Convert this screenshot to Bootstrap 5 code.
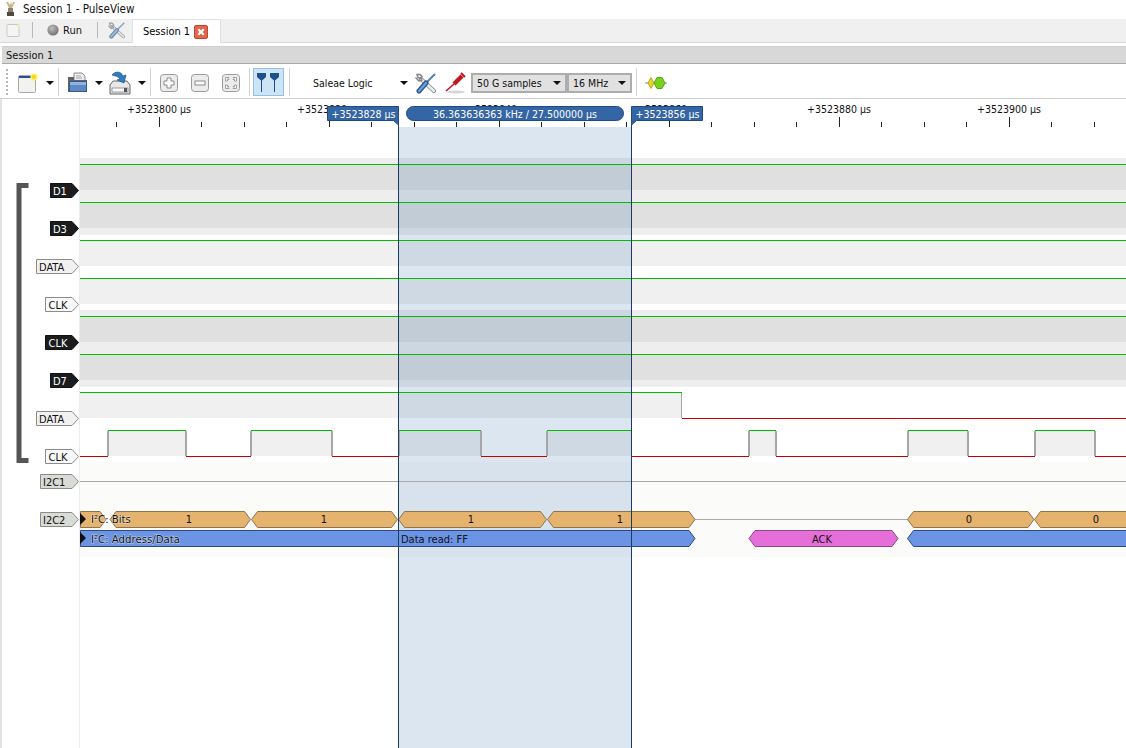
<!DOCTYPE html>
<html lang="en">
<head>
<meta charset="utf-8">
<title>Session 1 - PulseView</title>
<link href="https://cdn.jsdelivr.net/npm/bootstrap@5.3.0/dist/css/bootstrap.min.css" rel="stylesheet">
<style>
html,body{height:100%;margin:0;overflow:hidden;background:#fff}
body{font-family:"DejaVu Sans","Liberation Sans",sans-serif;font-stretch:condensed;font-size:10.5px;color:#111;line-height:1}
.pv-win{width:1126px;height:748px;overflow:hidden}
.pv-title{height:19px;padding-left:5px;font-size:11.5px}
.pv-title svg{margin-right:7px}
.pv-tabs{height:24px;background:#f0f0f0;border-bottom:1px solid #d9d9d9;padding-left:6px;font-size:11px}
.pv-tabs .nav-link{font-size:11px;color:#111;background:#fff;border:1px solid #d9d9d9;border-bottom:0;border-radius:0;height:24px;width:89px;padding:0 12px 0 10px;margin:1px 0 -1px 7px;display:flex;align-items:center;justify-content:space-between}
.pv-vsep{width:1px;height:16px;background:#b9b9b9}
.pv-sp10{margin-left:10px}
.pv-sp15{margin-left:15px}
.pv-sp13{margin-left:13px}
.pv-sp11{margin-left:11px}
.pv-sp9{margin-left:9px}
.pv-sp6{margin-left:6px}
.pv-sp7{margin-left:7px}
.pv-sp5{margin-left:5px}
.pv-sp3{margin-left:3px}
.pv-gap{height:3px}
.pv-dock{height:19px;background:#d8d8d8;border-top:1px solid #cfcfcf;border-bottom:1px solid #a9a9a9;margin-left:2px;padding-left:4px;font-size:11px}
.pv-tool{height:35px;border-bottom:1px solid #cfcfcf;padding:4px 0 0 6px}
.pv-grip{width:2px;height:26px;background:repeating-linear-gradient(#b5b5b5 0 2px,transparent 2px 4px)}
.pv-sep{width:1px;height:28px;background:#d4d4d4}
.pv-tool .pv-sep,.pv-tool .pv-grip{margin-top:-2px}
.pv-arrow{width:0;height:0;border:4px solid transparent;border-top:4px solid #111;border-bottom:0;flex:none}
.pv-arrow-w{width:9px;display:flex;justify-content:center}
.pv-toggle{width:31px;height:28px;padding:0;margin-top:-2px;background:#cde4f7;border:1px solid #92c0e6;border-radius:0;display:flex;align-items:center;justify-content:center}
.pv-device{width:120px;padding:0 2px 0 23px}
.pv-combo{height:20px;background:#e1e1e1;border:1px solid #adadad;outline:1px solid #adadad;outline-offset:-2px;padding:0 5px;display:flex;align-items:center;justify-content:space-between}
.pv-c1{width:96px}.pv-c2{width:65px}
.pv-canvas{display:block;width:1126px;height:649px}
.pv-canvas text{font-family:"DejaVu Sans","Liberation Sans",sans-serif;font-stretch:condensed;font-size:10.5px;fill:#111}
.pv-canvas text.wt{fill:#fff}
.pv-canvas text.tag{font-size:11px}
.pv-canvas text.hl{font-size:11.3px;paint-order:stroke;stroke:#fff;stroke-width:1px;stroke-opacity:.6}
</style>
</head>
<body>
<div class="pv-win d-flex flex-column">
  <div class="pv-title d-flex align-items-center">
    <svg width="11" height="15" viewBox="0 0 11 15"><path d="M1 0l3 6h3l3-6-2 0-1 3-1-3-1 3-2-3z" fill="#c9b48a"/><path d="M3 6h5v4H3z" fill="#8a8272"/><path d="M2 10h7v4H2z" fill="#4e4a42"/></svg>
    <span>Session 1 - PulseView</span>
  </div>
  <ul class="pv-tabs nav nav-tabs flex-nowrap align-items-center">
    <li class="d-flex"><svg width="15" height="15" viewBox="0 0 15 15"><rect x="1" y="1.500" width="12" height="12" rx="1" fill="#f5f5f1" stroke="#c9c9c9"/><circle cx="12" cy="3" r="1.600" fill="#f5eeb0"/></svg></li>
    <li class="pv-vsep pv-sp11"></li>
    <li class="d-flex align-items-center">
      <svg class="pv-sp13" width="14" height="14" viewBox="0 0 14 14"><defs><radialGradient id="ball" cx=".4" cy=".35" r=".7"><stop offset="0" stop-color="#bdbdbd"/><stop offset="1" stop-color="#6e6e6e"/></radialGradient></defs><circle cx="7" cy="7" r="5.600" fill="url(#ball)"/></svg>
      <span class="pv-sp3">Run</span>
    </li>
    <li class="pv-vsep pv-sp15"></li>
    <li class="d-flex pv-sp10"><svg width="17" height="17" viewBox="0 0 21 21"><g fill="none" stroke-linecap="round"><path d="M6 6l13 12" stroke="#9aa0a5" stroke-width="4"/><path d="M6 6l13 12" stroke="#e4e6e8" stroke-width="2.200"/><path d="M2 1.500l1 3 3 1 1-2-2-2zM1 5l3 3 3-1" stroke="#9aa0a5" stroke-width="1.500"/><path d="M19.500 1.500L12 9" stroke="#8ea6c2" stroke-width="2"/><path d="M11 10l-7 8" stroke="#6b8db4" stroke-width="5"/><path d="M11 10l-7 8" stroke="#a3bdd9" stroke-width="2"/></g></svg></li>
    <li class="nav-item"><a class="nav-link active" href="#"><span>Session 1</span>
      <svg width="14" height="14" viewBox="0 0 14 14"><rect x=".5" y=".5" width="13" height="13" rx="1.500" fill="#e0664e" stroke="#c4472f"/><path d="M4.200 4.200l5.600 5.600m0-5.600l-5.600 5.600" stroke="#fff" stroke-width="2"/></svg></a></li>
  </ul>
  <div class="pv-gap"></div>
  <div class="pv-dock d-flex align-items-center">Session 1</div>
  <div class="pv-tool d-flex align-items-center">
    <span class="pv-grip"></span>
    <svg class="pv-sp10" width="20" height="20" viewBox="0 0 20 20"><rect x=".5" y="2.500" width="17" height="17" rx="1" fill="#f2f2ee" stroke="#a9a9a9"/><rect x="1" y="3" width="14" height="2" fill="#2a4f98"/><circle cx="16" cy="4" r="3.600" fill="#ffef6a"/><circle cx="16" cy="4" r="2" fill="#f6d21c"/></svg>
    <span class="pv-arrow-w pv-sp7"><span class="pv-arrow"></span></span>
    <span class="pv-sep ms-1"></span>
    <svg class="ms-2" width="21" height="22" viewBox="0 0 21 22"><path d="M7 1h8l3 3v10H7z" fill="#ececec" stroke="#8f8f8f"/><path d="M9 4h5M9 6h6" stroke="#aaa"/><path d="M1 5h6v3h13v12H1z" fill="#5f646b"/><path d="M2.500 9.500h17v10h-17z" fill="#5d8ac4" stroke="#36598c"/><path d="M3 10h16v3H3z" fill="#8fb2de"/></svg>
    <span class="pv-arrow-w pv-sp6"><span class="pv-arrow"></span></span>
    <svg class="pv-sp6" width="22" height="24" viewBox="0 0 22 24"><path d="M1 14l3-4h14l3 4v9H1z" fill="#e8e8e8" stroke="#666"/><rect x="3" y="17" width="16" height="4" fill="#fafafa" stroke="#777" stroke-width=".7"/><rect x="15" y="17" width="3" height="4" fill="#555"/><path d="M3 4c3-4 9-4 11 1l3-1-2 8-7-3 3-1c-2-3-5-3-8-4z" fill="#2f7fc0" stroke="#1e578f" stroke-width=".7"/></svg>
    <span class="pv-arrow-w pv-sp6"><span class="pv-arrow"></span></span>
    <span class="pv-sep ms-1"></span>
    <svg class="pv-sp9" width="18" height="18" viewBox="0 0 18 18"><rect x=".5" y=".5" width="17" height="17" rx="3" fill="#ececec" stroke="#9a9a9a"/><path d="M7 4h4v3h3v4h-3v3H7v-3H4V7h3z" fill="#fafafa" stroke="#8c8c8c"/></svg>
    <svg class="pv-sp13" width="18" height="18" viewBox="0 0 18 18"><rect x=".5" y=".5" width="17" height="17" rx="3" fill="#ececec" stroke="#9a9a9a"/><rect x="4" y="7" width="10" height="4" fill="#fafafa" stroke="#8c8c8c"/></svg>
    <svg class="pv-sp13" width="18" height="18" viewBox="0 0 18 18"><rect x=".5" y=".5" width="17" height="17" rx="3" fill="#ececec" stroke="#9a9a9a"/><path d="M3.500 7V3.500H7l-1 1 1 1H5.500V7zM14.500 7V3.500H11l1 1-1 1h1.500V7zM3.500 11v3.500H7l-1-1 1-1H5.500V11zM14.500 11v3.500H11l1-1-1-1h1.500V11z" fill="#fafafa" stroke="#8c8c8c" stroke-width=".8"/></svg>
    <span class="pv-sep pv-sp9"></span>
    <button type="button" class="pv-toggle btn pv-sp3"><svg width="23" height="19" viewBox="0 0 23 19"><path d="M0 0h9v4L5 7.500V19H4V7.500L0 4zM13 0h9v4l-4 3.500V19h-1V7.500L13 4z" fill="#1d4f8c"/></svg></button>
    <span class="pv-sep pv-sp5"></span>
    <div class="pv-device d-flex align-items-center justify-content-between"><span>Saleae Logic</span><span class="pv-arrow"></span></div>
    <svg class="pv-sp5" width="21" height="21" viewBox="0 0 21 21"><g fill="none" stroke-linecap="round"><path d="M6 6l13 12" stroke="#7e8488" stroke-width="4"/><path d="M6 6l13 12" stroke="#eceeef" stroke-width="2.400"/><path d="M2 1.500l1 3 3 1 1-2-2-2zM1 5l3 3 3-1" stroke="#7e8488" stroke-width="1.500"/><path d="M19.500 1.500L12 9" stroke="#5b7fa8" stroke-width="2"/><path d="M11 10l-7 8" stroke="#2a5a90" stroke-width="5"/><path d="M11 10l-7 8" stroke="#6ea0d4" stroke-width="2.200"/></g></svg>
    <svg class="pv-sp9" width="21" height="22" viewBox="0 0 21 22"><ellipse cx="11" cy="20" rx="9" ry="1.500" fill="#d6d6d6"/><g fill="none" stroke="#c4161c"><path d="M17 4l-8 8" stroke-width="4.500"/><path d="M9 12l-8 7" stroke-width="1.600"/><path d="M16 1l4 4" stroke-width="2"/></g></svg>
    <div class="pv-combo pv-c1 pv-sp5"><span>50 G samples</span><span class="pv-arrow"></span></div>
    <div class="pv-combo pv-c2"><span>16 MHz</span><span class="pv-arrow"></span></div>
    <span class="pv-sep ms-1"></span>
    <svg class="ms-2" width="22" height="14" viewBox="0 0 22 14"><path d="M0 7h22" stroke="#888"/><path d="M3 7l3-5.500 3 5.500-3 5.500z" fill="#e6d52b" stroke="#b8a71c"/><path d="M9 7l3-5.500h5l3 5.500-3 5.500h-5z" fill="#76d21c" stroke="#58a312"/></svg>
  </div>
  <svg class="pv-canvas flex-shrink-0" viewBox="0 99 1126 649" shape-rendering="crispEdges">
    <rect x="0" y="99" width="2" height="649" fill="#e4e4e4"/>
    <rect x="79" y="99" width="1" height="649" fill="#ececec"/>
    <g fill="#eeeeee"><rect x="80" y="158" width="1046" height="6"/><rect x="80" y="190" width="1046" height="12"/><rect x="80" y="228" width="1046" height="7"/><rect x="80" y="310" width="1046" height="6"/><rect x="80" y="342" width="1046" height="12"/><rect x="80" y="380" width="1046" height="7"/></g>
    <g fill="#e0e0e0"><rect x="80" y="164" width="1046" height="26"/><rect x="80" y="202" width="1046" height="26"/><rect x="80" y="316" width="1046" height="26"/><rect x="80" y="354" width="1046" height="26"/></g>
    <g fill="#f0f0f0"><rect x="80" y="240" width="1046" height="26"/><rect x="80" y="278" width="1046" height="26"/><rect x="80" y="392" width="602" height="26"/>
      <rect x="108" y="430" width="78" height="26"/><rect x="251" y="430" width="81" height="26"/><rect x="398" y="430" width="83" height="26"/><rect x="547" y="430" width="85" height="26"/><rect x="749" y="430" width="27" height="26"/><rect x="908" y="430" width="60" height="26"/><rect x="1035" y="430" width="60" height="26"/></g>
    <rect x="80" y="462" width="1046" height="95" fill="#fbfbf9"/>
    <rect x="398" y="127" width="234" height="621" fill="#2463a7" fill-opacity=".16"/>
    <g fill="#00be00"><rect x="80" y="164" width="1046" height="1"/><rect x="80" y="202" width="1046" height="1"/><rect x="80" y="240" width="1046" height="1"/><rect x="80" y="278" width="1046" height="1"/><rect x="80" y="316" width="1046" height="1"/><rect x="80" y="354" width="1046" height="1"/><rect x="80" y="392" width="602" height="1"/>
      <rect x="108" y="430" width="78" height="1"/><rect x="251" y="430" width="81" height="1"/><rect x="398" y="430" width="83" height="1"/><rect x="547" y="430" width="85" height="1"/><rect x="749" y="430" width="27" height="1"/><rect x="908" y="430" width="60" height="1"/><rect x="1035" y="430" width="60" height="1"/></g>
    <g fill="#a6a6a6"><rect x="681" y="393" width="1" height="25"/><rect x="107" y="431" width="2" height="25"/><rect x="185" y="431" width="2" height="25"/><rect x="250" y="431" width="2" height="25"/><rect x="331" y="431" width="2" height="25"/><rect x="398" y="431" width="2" height="25"/><rect x="480" y="431" width="2" height="25"/><rect x="546" y="431" width="2" height="25"/><rect x="631" y="431" width="1" height="25"/><rect x="748" y="431" width="2" height="25"/><rect x="775" y="431" width="2" height="25"/><rect x="907" y="431" width="2" height="25"/><rect x="967" y="431" width="2" height="25"/><rect x="1034" y="431" width="2" height="25"/><rect x="1094" y="431" width="2" height="25"/></g>
    <g fill="#c80000"><rect x="682" y="418" width="444" height="1"/><rect x="80" y="456" width="28" height="1"/><rect x="186" y="456" width="65" height="1"/><rect x="332" y="456" width="66" height="1"/><rect x="481" y="456" width="66" height="1"/><rect x="632" y="456" width="117" height="1"/><rect x="776" y="456" width="132" height="1"/><rect x="968" y="456" width="67" height="1"/><rect x="1095" y="456" width="31" height="1"/></g>
    <rect x="80" y="481" width="1046" height="1" fill="#a8a8a8"/>
    <rect x="695" y="519" width="213" height="1" fill="#a8a8a8"/>
    <g shape-rendering="auto" stroke-width="1">
      <g fill="#e6b36e" stroke="#8c7350">
        <path d="M80.500 511.500H100L106 519.500 100 527.500H80.500z"/>
        <path d="M110 519.500L116 511.500H244.500L250.500 519.500 244.500 527.500H116z"/>
        <path d="M251.500 519.500L257.500 511.500H391.500L397.500 519.500 391.500 527.500H257.500z"/>
        <path d="M398.500 519.500L404.500 511.500H540.500L546.500 519.500 540.500 527.500H404.500z"/>
        <path d="M547.500 519.500L553.500 511.500H689L695 519.500 689 527.500H553.500z"/>
        <path d="M907.500 519.500L913.500 511.500H1028L1034 519.500 1028 527.500H913.500z"/>
        <path d="M1034.500 519.500L1040.500 511.500H1130V527.500H1040.500z"/>
      </g>
      <g fill="#6b94e5" stroke="#2f4a7a">
        <path d="M80.500 530.500H689L695 538.500 689 546.500H80.500z"/>
        <path d="M907.500 538.500L913.500 530.500H1130V546.500H913.500z"/>
      </g>
      <path d="M749 538.500L755 530.500H892L898 538.500 892 546.500H755z" fill="#e56ed9" stroke="#8c4a85"/>
      <path d="M80 513l6 6-6 6zM80 532l6 6-6 6z" fill="#111"/>
    </g>
    <g text-anchor="middle" shape-rendering="auto">
      <text class="tag" x="189" y="523">1</text><text class="tag" x="324" y="523">1</text><text class="tag" x="471" y="523">1</text><text class="tag" x="620" y="523">1</text><text class="tag" x="969" y="523">0</text><text class="tag" x="1096" y="523">0</text><text class="tag" x="822" y="543">ACK</text>
    </g>
    <text class="hl" x="91" y="523">I²C: Bits</text>
    <text class="hl" x="91" y="543">I²C: Address/Data</text>
    <text class="tag" x="401" y="543">Data read: FF</text>
    <rect x="398" y="122" width="1" height="626" fill="#1c3a66"/>
    <rect x="631" y="122" width="1" height="626" fill="#1c3a66"/>
    <path fill="#222" d="M116 122h1v5h-1zM159 117h1v10h-1zM201 122h1v5h-1zM244 122h1v5h-1zM286 122h1v5h-1zM329 117h1v10h-1zM371 122h1v5h-1zM414 122h1v5h-1zM456 122h1v5h-1zM499 117h1v10h-1zM541 122h1v5h-1zM584 122h1v5h-1zM626 122h1v5h-1zM669 117h1v10h-1zM711 122h1v5h-1zM754 122h1v5h-1zM796 122h1v5h-1zM839 117h1v10h-1zM881 122h1v5h-1zM924 122h1v5h-1zM966 122h1v5h-1zM1009 117h1v10h-1zM1051 122h1v5h-1zM1094 122h1v5h-1z"/>
    <g text-anchor="middle" shape-rendering="auto">
      <text x="159" y="113">+3523800 µs</text><text x="329" y="113">+3523820 µs</text><text x="499" y="113">+3523840 µs</text><text x="669" y="113">+3523860 µs</text><text x="839" y="113">+3523880 µs</text><text x="1009" y="113">+3523900 µs</text>
    </g>
    <g shape-rendering="auto" fill="#3465a4" stroke="#204a87">
      <path d="M327.500 106.500H398.500V125L393.500 120.500H327.500z"/>
      <rect x="406.500" y="106.500" width="217" height="14" rx="7"/>
      <path d="M631.500 125V106.500H702.500V120.500H636.500z"/>
    </g>
    <g shape-rendering="auto" text-anchor="middle">
      <text class="wt" x="363.500" y="118">+3523828 µs</text>
      <text class="wt" x="515" y="118">36.363636363 kHz / 27.500000 µs</text>
      <text class="wt" x="667.500" y="118">+3523856 µs</text>
    </g>
    <path d="M28.500 185.500H19V460.500H28.500" fill="none" stroke="#555" stroke-width="5" shape-rendering="auto"/>
    <g shape-rendering="auto">
      <g fill="#1a1c1e" stroke="#111"><path d="M50.500 183.500H72L78.500 190.500 72 197.500H50.500z"/><path d="M50.500 221.500H72L78.500 228.500 72 235.500H50.500z"/><path d="M45.500 335.500H72L78.500 342.500 72 349.500H45.500z"/><path d="M50.500 373.500H72L78.500 380.500 72 387.500H50.500z"/></g>
      <g fill="#f1f1f1" stroke="#8b8b8b"><path d="M36.500 259.500H72L78.500 266.500 72 273.500H36.500z"/><path d="M36.500 411.500H72L78.500 418.500 72 425.500H36.500z"/></g>
      <g fill="#f8f8f8" stroke="#8b8b8b"><path d="M45.500 297.500H72L78.500 304.500 72 311.500H45.500z"/><path d="M45.500 449.500H72L78.500 456.500 72 463.500H45.500z"/></g>
      <g fill="#d9dbd6" stroke="#8b8b8b"><path d="M40.500 474.500H72L78.500 481.500 72 488.500H40.500z"/><path d="M40.500 512.500H72L78.500 519.500 72 526.500H40.500z"/></g>
      <text class="wt tag" x="53" y="195">D1</text><text class="wt tag" x="53" y="233">D3</text><text class="tag" x="39" y="271">DATA</text><text class="tag" x="48.500" y="309">CLK</text><text class="wt tag" x="48.500" y="347">CLK</text><text class="wt tag" x="53" y="385">D7</text><text class="tag" x="39" y="423">DATA</text><text class="tag" x="48.500" y="461">CLK</text><text class="tag" x="43" y="486">I2C1</text><text class="tag" x="43" y="524">I2C2</text>
    </g>
  </svg>
</div>
<script src="https://cdn.jsdelivr.net/npm/bootstrap@5.3.0/dist/js/bootstrap.bundle.min.js"></script>
</body>
</html>
